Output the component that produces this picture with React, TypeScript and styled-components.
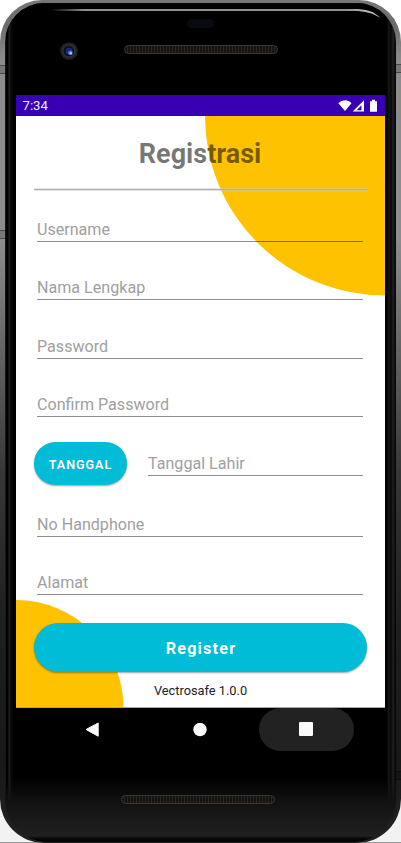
import React from "react";
import styled, { createGlobalStyle } from "styled-components";

const GlobalStyle = createGlobalStyle`
  *, *::before, *::after { box-sizing: border-box; }
  body {
    margin: 0;
    overflow: hidden;
    background: linear-gradient(#fff 0 420px, #f2f2f2 420px 842px, #999 842px);
    font-family: Roboto, "Liberation Sans", sans-serif;
  }
`;

const Rim = styled.div`
  position: relative;
  width: 401px;
  height: 843px;
  padding: 3px 5px 1px;
  border-radius: 42px 42px 44px 44px;
  overflow: hidden;
  background: linear-gradient(#777 0, #6c6c6c 25px, #8c8c8c 60px, #8c8c8c 240px, #686868 340px, #383838 470px, #202020 610px, #181818 760px, #222 843px);
`;

const Body = styled.div`
  position: relative;
  display: flex;
  flex-direction: column;
  height: 839px;
  padding: 0 11px;
  border-radius: 39px 39px 42px 42px;
  overflow: hidden;
  background: linear-gradient(transparent 775px, #121212 800px, #202020 833px, #050505 836px),
    linear-gradient(90deg, #171717 0 1px, #000 1px 3px, #222 4px, #090909 6px, #000 9px, #000 382px, #181818 384px, #050505 386px, #222 388px, #080808 390px);
`;

const TopShine = styled.svg`
  position: absolute;
  left: 0;
  top: 0;
`;

const SideMark = styled.i<{ $top: number; $right?: boolean }>`
  position: absolute;
  top: ${(p) => p.$top}px;
  ${(p) => (p.$right ? "right: 0;" : "left: 0;")}
  width: 5px;
  height: 9px;
  border: solid rgba(0, 0, 0, 0.4);
  border-width: 1px 0;
  background: rgba(0, 0, 0, 0.15);
`;

const TopBezel = styled.header`
  position: relative;
  flex: 0 0 92px;
`;

const Lens = styled.svg`
  position: absolute;
  left: 44px;
  top: 39px;
`;

const Sensor = styled.i`
  position: absolute;
  left: 171px;
  top: 16px;
  width: 27px;
  height: 9px;
  border-radius: 5px;
  background: #090a10;
`;

const Grille = styled.i<{ $left: number; $top: number }>`
  position: absolute;
  left: ${(p) => p.$left}px;
  top: ${(p) => p.$top}px;
  width: 154px;
  height: 9px;
  border: 1px solid #383838;
  border-radius: 5px;
  background: repeating-linear-gradient(90deg, #151411 0 2px, #28251f 2px 3px);
`;

const StatusBar = styled.div`
  display: flex;
  flex: 0 0 21px;
  align-items: center;
  justify-content: space-between;
  padding: 0 7px 0 6.5px;
  background: #3700b3;
  color: #f2ecff;
  font-size: 13.2px;
  line-height: 21px;
`;

const Screen = styled.main`
  position: relative;
  display: flex;
  flex: 0 0 592px;
  flex-direction: column;
  padding: 0 18px;
  overflow: hidden;
  background: #fff;
  border-bottom: 1px solid #a6a6a6;
`;

const Backdrop = styled.svg`
  position: absolute;
  left: 0;
  top: 0;
`;

const Title = styled.h1`
  position: relative;
  margin: 0;
  height: 72px;
  padding: 20px 1px 0 0;
  color: rgba(0, 0, 0, 0.54);
  font-size: 27px;
  font-weight: 700;
  line-height: 36px;
  text-align: center;
`;

const Divider = styled.hr`
  position: relative;
  width: 333px;
  height: 3px;
  margin: 0;
  border: solid rgba(200, 200, 200, 0.5);
  border-width: 1px 0;
  background: #b0b0b0;
  background-clip: padding-box;
`;

const Field = styled.div<{ $height: number }>`
  position: relative;
  display: flex;
  flex: 0 0 ${(p) => p.$height}px;
  align-items: flex-end;
  height: ${(p) => p.$height}px;
  margin: 0 4px 0 3px;
  padding-bottom: 2px;
  border-bottom: 1px solid rgba(0, 0, 0, 0.45);
  color: #a0a0a0;
  font-size: 16.1px;
  line-height: 19px;
`;

const DateRow = styled.div`
  display: flex;
  flex: 0 0 68px;
  padding-top: 25px;
`;

const DateField = styled(Field)`
  flex: 0 0 215px;
  height: 34px;
  margin: 0 0 0 21px;
`;

const PillButton = styled.button<{ $large?: boolean }>`
  position: relative;
  flex: none;
  width: ${(p) => (p.$large ? 333 : 93)}px;
  height: ${(p) => (p.$large ? 49 : 43)}px;
  margin: ${(p) => (p.$large ? "28px 0 0" : "0")};
  padding: ${(p) => (p.$large ? "2px 0 0 1px" : "1px 0 0")};
  border: 0;
  border-radius: 25px;
  background: #00bcd7;
  box-shadow: 0 1px 2px rgba(0, 0, 0, 0.38);
  color: #fff;
  font-family: inherit;
  font-size: ${(p) => (p.$large ? 16.2 : 12.6)}px;
  font-weight: ${(p) => (p.$large ? 700 : 600)};
  letter-spacing: ${(p) => (p.$large ? 1.2 : 0.95)}px;
`;

const Version = styled.p`
  position: relative;
  margin: 10px 0 0;
  color: #222;
  font-size: 12.8px;
  line-height: 17px;
  text-align: center;
`;

const NavBar = styled.nav`
  display: grid;
  flex: 0 0 43px;
  grid-template-columns: 97px 118px 95px;
  padding-left: 28px;
`;

const NavButton = styled.button<{ $active?: boolean }>`
  display: flex;
  align-items: center;
  justify-content: center;
  padding: 0;
  border: 0;
  border-radius: 22px;
  background: ${(p) => (p.$active ? "#222" : "transparent")};
`;

const Chin = styled.footer`
  position: relative;
  flex: 1;
`;

const CameraLens = () => (
  <Lens width="18" height="18" viewBox="0 0 18 18">
    <circle cx="9" cy="9" r="8.8" fill="#222" />
    <circle cx="9" cy="9" r="6.8" fill="#303030" />
    <circle cx="8.8" cy="9" r="5.3" fill="#0a0e22" />
    <circle cx="9" cy="9.2" r="3.4" fill="#162a78" />
    <circle cx="10.4" cy="10.8" r="2.3" fill="#526be0" />
    <circle cx="10.8" cy="11.2" r="1.2" fill="#b4c7ff" />
  </Lens>
);

const StatusIcons = () => (
  <svg width="40" height="14" viewBox="0 0 40 14" fill="#fff">
    <path d="M.4 4.2C4.2.2 10.2.2 13.5 4.2L7 12Z" />
    <path fillRule="evenodd" d="M14.7 12.6 26 1.2V12.6ZM18.6 11.3H23.4V6.3Z" />
    <path d="M32 2.2h2V.8h3v1.4h2v10.6h-7Z" />
  </svg>
);

export default function App() {
  return (
    <>
      <GlobalStyle />
      <Rim>
        <SideMark $top={65} />
        <SideMark $top={230} />
        <SideMark $top={64} $right />
        <SideMark $top={771} $right />
        <Body>
          <TopShine width="391" height="30" viewBox="0 0 391 30">
            <defs>
              <linearGradient id="shine">
                <stop stopColor="#899492" stopOpacity="0" />
                <stop offset=".1" stopColor="#899492" />
                <stop offset=".9" stopColor="#899492" />
                <stop offset="1" stopColor="#ccd2d0" />
              </linearGradient>
            </defs>
            <path d="M0 .8H391" stroke="#050505" strokeWidth="2" />
            <path d="M46 6h303c12 0 20 2 26 9-7-5-15-7-26-7H46Z" fill="url(#shine)" />
          </TopShine>
          <TopBezel>
            <CameraLens />
            <Sensor />
            <Grille $left={108} $top={42} />
          </TopBezel>
          <StatusBar>
            <span>7:34</span>
            <StatusIcons />
          </StatusBar>
          <Screen>
            <Backdrop width="369" height="592" fill="#ffc200">
              <ellipse cx="369" cy="0" rx="180" ry="179.5" />
              <ellipse cx="0" cy="592" rx="107.5" ry="108" />
            </Backdrop>
            <Title>Registrasi</Title>
            <Divider />
            <Field $height={51}>Username</Field>
            <Field $height={58}>Nama Lengkap</Field>
            <Field $height={59}>Password</Field>
            <Field $height={58}>Confirm Password</Field>
            <DateRow>
              <PillButton>TANGGAL</PillButton>
              <DateField $height={34}>Tanggal Lahir</DateField>
            </DateRow>
            <Field $height={52}>No Handphone</Field>
            <Field $height={58}>Alamat</Field>
            <PillButton $large>Register</PillButton>
            <Version>Vectrosafe 1.0.0</Version>
          </Screen>
          <NavBar>
            <NavButton aria-label="Back">
              <svg width="15" height="16" viewBox="0 0 15 16"><path d="M13.2 1v13.2L1 7.5Z" fill="#fafafa" stroke="#fafafa" strokeLinejoin="round" /></svg>
            </NavButton>
            <NavButton aria-label="Home">
              <svg width="14" height="14"><circle cx="7" cy="6.5" r="6.7" fill="#fafafa" /></svg>
            </NavButton>
            <NavButton $active aria-label="Recent apps">
              <svg width="15" height="15"><rect width="14" height="14" rx="1" fill="#fafafa" /></svg>
            </NavButton>
          </NavBar>
          <Chin>
            <Grille $left={105} $top={44} />
          </Chin>
        </Body>
      </Rim>
    </>
  );
}
